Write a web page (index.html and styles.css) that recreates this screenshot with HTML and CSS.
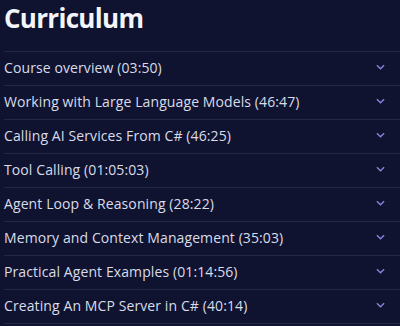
FILE: index.html
```html
<!DOCTYPE html>
<html lang="en">
<head>
  <meta charset="UTF-8">
  <title>Curriculum</title>
  <link rel="stylesheet" href="styles.css">
</head>
<body>
  <div class="container">
    <h2>Curriculum</h2>
    <ul class="lessons">
      <li><span>Course overview (03:50)</span><svg class="chev" viewBox="0 0 10 6"><path d="M1 1l4 4 4-4"/></svg></li>
      <li><span>Working with Large Language Models (46:47)</span><svg class="chev" viewBox="0 0 10 6"><path d="M1 1l4 4 4-4"/></svg></li>
      <li><span>Calling AI Services From C# (46:25)</span><svg class="chev" viewBox="0 0 10 6"><path d="M1 1l4 4 4-4"/></svg></li>
      <li><span>Tool Calling (01:05:03)</span><svg class="chev" viewBox="0 0 10 6"><path d="M1 1l4 4 4-4"/></svg></li>
      <li><span>Agent Loop &amp; Reasoning (28:22)</span><svg class="chev" viewBox="0 0 10 6"><path d="M1 1l4 4 4-4"/></svg></li>
      <li><span>Memory and Context Management (35:03)</span><svg class="chev" viewBox="0 0 10 6"><path d="M1 1l4 4 4-4"/></svg></li>
      <li><span>Practical Agent Examples (01:14:56)</span><svg class="chev" viewBox="0 0 10 6"><path d="M1 1l4 4 4-4"/></svg></li>
      <li><span>Creating An MCP Server in C# (40:14)</span><svg class="chev" viewBox="0 0 10 6"><path d="M1 1l4 4 4-4"/></svg></li>
    </ul>
  </div>
</body>
</html>
```
FILE: styles.css
```css
html, body { margin: 0; background: #0f1330; }
body { font-family: "Open Sans", "DejaVu Sans", sans-serif; color: #d9dbe8; }
.container { padding: 0 0 0 4px; }
h2 { margin: 0; height: 51px; font-size: 26px; font-weight: 700; color: #f4f5fa; line-height: 36px; letter-spacing: -0.7px; }
.lessons { list-style: none; margin: 0; padding: 0; border-top: 1px solid #232846; }
.lessons li { display: flex; align-items: center; justify-content: space-between; height: 33px; border-bottom: 1px solid #232846; font-size: 14px; letter-spacing: 0.1px; padding-right: 15px; }
.lessons li span { margin-top: -2px; }
.chev { width: 9px; height: 6px; margin-top: -3px; fill: none; stroke: #8d80d8; stroke-width: 1.6; }
```
